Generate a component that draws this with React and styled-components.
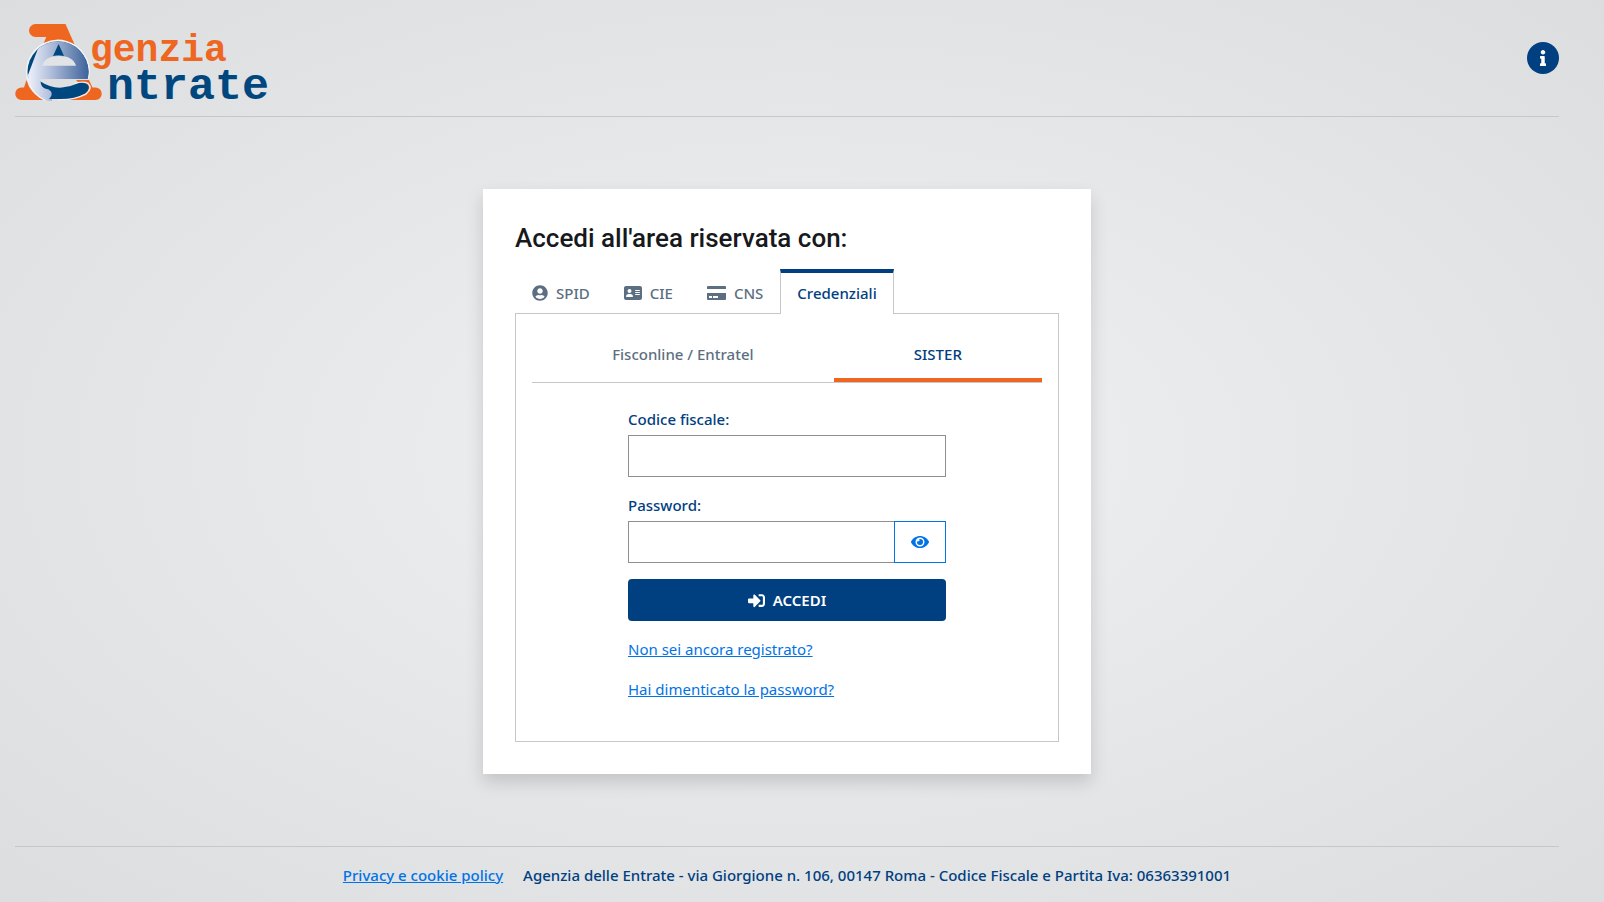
import React, { useState } from 'react';
import styled, { createGlobalStyle, css } from 'styled-components';
import { FaInfo, FaUserCircle, FaEye, FaSignInAlt } from 'react-icons/fa';
import { FaAddressCard } from 'react-icons/fa6';

const blue = '#004080';
const linkBlue = '#0073e6';
const slate = '#5c6f82';
const orange = '#ee661f';
const line = '#c6c7c8';

const GlobalStyle = createGlobalStyle`
  * {
    box-sizing: border-box;
  }
  body {
    margin: 0;
    font-family: 'Noto Sans', 'Open Sans', sans-serif;
    font-size: 15px;
    line-height: 24px;
    color: ${blue};
  }
`;

const Page = styled.div`
  display: flex;
  flex-direction: column;
  min-height: 100vh;
  padding: 0 45px 0 15px;
  background: radial-gradient(ellipse at center, #f0f1f2 0%, #dcdddf 100%);
`;

const Header = styled.header`
  display: flex;
  justify-content: space-between;
  padding: 24px 0 0;
  border-bottom: 1px solid ${line};
`;

const HomeLink = styled.a`
  display: block;
  height: 92px;
`;

const InfoButton = styled.button`
  display: flex;
  align-items: center;
  justify-content: center;
  width: 32px;
  height: 32px;
  margin-top: 18px;
  padding: 0;
  border: 0;
  border-radius: 50%;
  background: ${blue};
  color: #fff;
  font-size: 16px;
`;

const Main = styled.main`
  display: flex;
  flex: 1;
  align-items: center;
  justify-content: center;
`;

const Card = styled.section`
  width: 100%;
  max-width: 608px;
  padding: 32px;
  background: #fff;
  box-shadow: 0 8px 16px rgba(0, 0, 0, 0.15);
`;

const Title = styled.h1`
  margin: 0 0 14px;
  font-family: Roboto, sans-serif;
  font-size: 26px;
  font-weight: 500;
  line-height: 34px;
  color: #17191c;
`;

const Tabs = styled.div`
  display: flex;
`;

const Tab = styled.button`
  display: flex;
  align-items: center;
  gap: 8px;
  height: 45px;
  margin-bottom: -1px;
  padding: 2px 16px 0;
  border: 1px solid transparent;
  border-width: 0 1px;
  background: none;
  font: inherit;
  font-weight: 500;
  color: ${slate};

  ${props => props.$active && css`
    padding: 0 16px 2px;
    border-color: ${line};
    border-top: 4px solid ${blue};
    background: #fff;
    color: ${blue};
  `}
`;

const Panel = styled.div`
  padding: 16px 16px 24px;
  border: 1px solid ${line};
`;

const SubTabs = styled.div`
  display: flex;
  border-bottom: 1px solid ${line};
`;

const SubTab = styled.button`
  flex: 1 1 auto;
  height: 52px;
  padding: 0 78px;
  border: 0;
  border-bottom: 4px solid ${props => (props.$active ? orange : 'transparent')};
  background: none;
  font: inherit;
  font-weight: 500;
  color: ${props => (props.$active ? blue : slate)};
`;

const Form = styled.form`
  display: flex;
  flex-direction: column;
  max-width: 318px;
  margin: 24px auto 0;
`;

const Label = styled.label`
  margin-bottom: 4px;
  font-weight: 500;
`;

const Input = styled.input`
  flex: 1;
  min-width: 0;
  height: 42px;
  padding: 0 8px;
  border: 1px solid #8f8f8f;
  border-radius: 0;
  background: #fff;
  font: inherit;
`;

const Field = styled.div`
  display: flex;
  margin-bottom: 16px;
`;

const EyeButton = styled.button`
  display: flex;
  align-items: center;
  justify-content: center;
  width: 52px;
  height: 42px;
  margin-left: -1px;
  padding: 0;
  border: 1px solid ${linkBlue};
  background: #fff;
  color: ${linkBlue};
  font-size: 18px;
`;

const SubmitButton = styled.button`
  display: flex;
  align-items: center;
  justify-content: center;
  gap: 8px;
  height: 42px;
  margin-bottom: 16px;
  border: 0;
  border-radius: 4px;
  background: ${blue};
  color: #fff;
  font: inherit;
  font-weight: 600;
`;

const Link = styled.a`
  color: ${linkBlue};
`;

const FormLink = styled(Link)`
  align-self: flex-start;
  margin-bottom: 16px;
`;

const Footer = styled.footer`
  display: flex;
  flex-wrap: wrap;
  justify-content: center;
  gap: 0 20px;
  padding: 16px 0 15px;
  border-top: 1px solid ${line};
  font-weight: 500;
`;

const Logo = () => (
  <svg width="256" height="92" viewBox="15 24 256 92" role="img" aria-label="Agenzia Entrate">
    <defs>
      <linearGradient id="steel" x1="0" x2="1">
        <stop offset="0" stopColor="#eef1fa" />
        <stop offset="0.3" stopColor="#b9c5df" />
        <stop offset="1" stopColor="#2c5592" />
      </linearGradient>
      <clipPath id="disc"><circle cx="58" cy="72" r="30.5" /></clipPath>
    </defs>
    {/* the big A behind the disc */}
    <path fill={orange} d="M35.5 24H65.5L74.7 44.7Q58 37 43.3 44L46.3 37H35.5A6.5 6.5 0 0 1 35.5 24Z" />
    <path fill={orange} d="M26.5 80L24 87.5H21.5A6.2 6.2 0 0 0 21.5 100H45Q30 94 26.5 80Z" />
    <path fill={orange} d="M76 80H89L92.5 87.5H95.5A6.2 6.2 0 0 1 95.5 100H70L82 86Z" />
    <path fill="none" stroke="#f3f4f6" strokeWidth="1.5" d="M88.5 78A31.2 31.2 0 1 0 45 100" />
    {/* the disc with the e cut out of it */}
    <g clipPath="url(#disc)">
      <path fill="#00477f" d="M27 78V40H90V78Z" />
      <path fill="url(#steel)" d="M42 38H76L94 79H40.5V84L52 92V101H46Q28 94 28 75Z" />
      <path fill="#00477f" d="M58.6 44L64 56Q58.5 54.5 53 56Z" />
      <path fill="#e1e3e6" d="M42 65.7Q45 56 59 56Q73 56 76 65.7Z" />
    </g>
    <path fill="none" stroke="#eceef1" strokeWidth="1.5" d="M74 84Q82 81 88 83.5Q93 88 86 94Q74 100 58 99.5" />
    <path fill="#00477f" d="M40.5 81.5Q51 88.5 62 87.5Q70 87 76 84Q82 81.5 87 84Q91.5 88 85 93.5Q74 99.5 58 99H49Q53 95 51 91.5Q49 89 45 88.5Q41 87 40.5 81.5Z" />
    <g fontFamily="'Liberation Mono', monospace" fontWeight="700">
      <text x="90" y="61" fontSize="38" fill={orange}>genzia</text>
      <text x="107" y="99" fontSize="45" fill="#00477f">ntrate</text>
    </g>
  </svg>
);

const CardIcon = () => (
  <svg width="19" height="14" viewBox="0 0 19 14" fill="currentColor" aria-hidden="true">
    <path d="M1 0H18Q19 0 19 1V3H0V1Q0 0 1 0Z" />
    <path fillRule="evenodd" d="M0 7H19V13Q19 14 18 14H1Q0 14 0 13ZM2 10V12H5V10ZM6 10V12H11V10Z" />
  </svg>
);

const tabs = [
  { name: 'SPID', icon: <FaUserCircle size={16} /> },
  { name: 'CIE', icon: <FaAddressCard size={18} /> },
  { name: 'CNS', icon: <CardIcon /> },
  { name: 'Credenziali' },
];

const App = () => {
  const [tab, setTab] = useState('Credenziali');
  const [service, setService] = useState('SISTER');
  const [showPassword, setShowPassword] = useState(false);

  return (
    <Page>
      <GlobalStyle />
      <Header>
        <HomeLink href="#"><Logo /></HomeLink>
        <InfoButton aria-label="Informazioni"><FaInfo /></InfoButton>
      </Header>

      <Main>
        <Card>
          <Title>Accedi all'area riservata con:</Title>
          <Tabs role="tablist">
            {tabs.map(({ name, icon }) => (
              <Tab key={name} role="tab" aria-selected={tab === name} $active={tab === name} onClick={() => setTab(name)}>
                {icon}{name}
              </Tab>
            ))}
          </Tabs>
          <Panel>
            <SubTabs role="tablist">
              {['Fisconline / Entratel', 'SISTER'].map(name => (
                <SubTab key={name} role="tab" aria-selected={service === name} $active={service === name} onClick={() => setService(name)}>
                  {name}
                </SubTab>
              ))}
            </SubTabs>
            <Form onSubmit={e => e.preventDefault()}>
              <Label htmlFor="codice">Codice fiscale:</Label>
              <Field>
                <Input id="codice" type="text" />
              </Field>
              <Label htmlFor="password">Password:</Label>
              <Field>
                <Input id="password" type={showPassword ? 'text' : 'password'} />
                <EyeButton type="button" aria-label="Mostra password" onClick={() => setShowPassword(!showPassword)}>
                  <FaEye />
                </EyeButton>
              </Field>
              <SubmitButton type="submit"><FaSignInAlt size={17} />ACCEDI</SubmitButton>
              <FormLink href="#">Non sei ancora registrato?</FormLink>
              <FormLink href="#">Hai dimenticato la password?</FormLink>
            </Form>
          </Panel>
        </Card>
      </Main>

      <Footer>
        <Link href="#">Privacy e cookie policy</Link>
        <span>Agenzia delle Entrate - via Giorgione n. 106, 00147 Roma - Codice Fiscale e Partita Iva: 06363391001</span>
      </Footer>
    </Page>
  );
};

export default App;
